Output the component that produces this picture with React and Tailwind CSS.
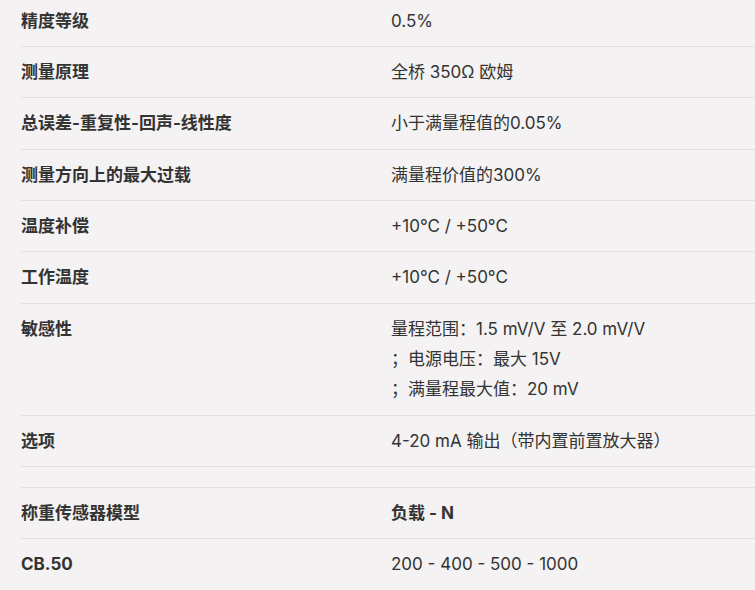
const rows = [
  { label: "精度等级", value: ["0.5%"] },
  { label: "测量原理", value: ["全桥 350Ω 欧姆"] },
  { label: "总误差-重复性-回声-线性度", value: ["小于满量程值的0.05%"] },
  { label: "测量方向上的最大过载", value: ["满量程价值的300%"] },
  { label: "温度补偿", value: ["+10°C / +50°C"] },
  { label: "工作温度", value: ["+10°C / +50°C"] },
  {
    label: "敏感性",
    value: ["量程范围：1.5 mV/V 至 2.0 mV/V", "；电源电压：最大 15V", "；满量程最大值：20 mV"],
  },
  { label: "选项", value: ["4-20 mA 输出（带内置前置放大器）"] },
  { empty: true },
  { label: "称重传感器模型", value: ["负载 - N"], boldValue: true },
  { label: "CB.50", value: ["200 - 400 - 500 - 1000"], last: true },
];

export default function App() {
  return (
    <div
      className="w-[755px] h-[590px] overflow-hidden bg-[#f4f2f3] text-[#333333] text-[17px]"
      style={{ fontFamily: 'Inter, "Noto Sans CJK SC", sans-serif' }}
    >
      <div className="ml-[21px] -mt-[4.33px]">
        {rows.map((row, i) =>
          row.empty ? (
            <div key={i} className="h-[21px] border-b border-[#e2dfe0]" />
          ) : (
            <div
              key={i}
              className={`grid grid-cols-[370px_1fr] py-[10px] leading-[30.33px] ${
                row.last ? "" : "border-b border-[#e2dfe0]"
              }`}
            >
              <div className="font-bold">{row.label}</div>
              <div className={row.boldValue ? "font-bold" : ""}>
                {row.value.map((v, j) => (
                  <div key={j}>{v}</div>
                ))}
              </div>
            </div>
          )
        )}
      </div>
    </div>
  );
}
